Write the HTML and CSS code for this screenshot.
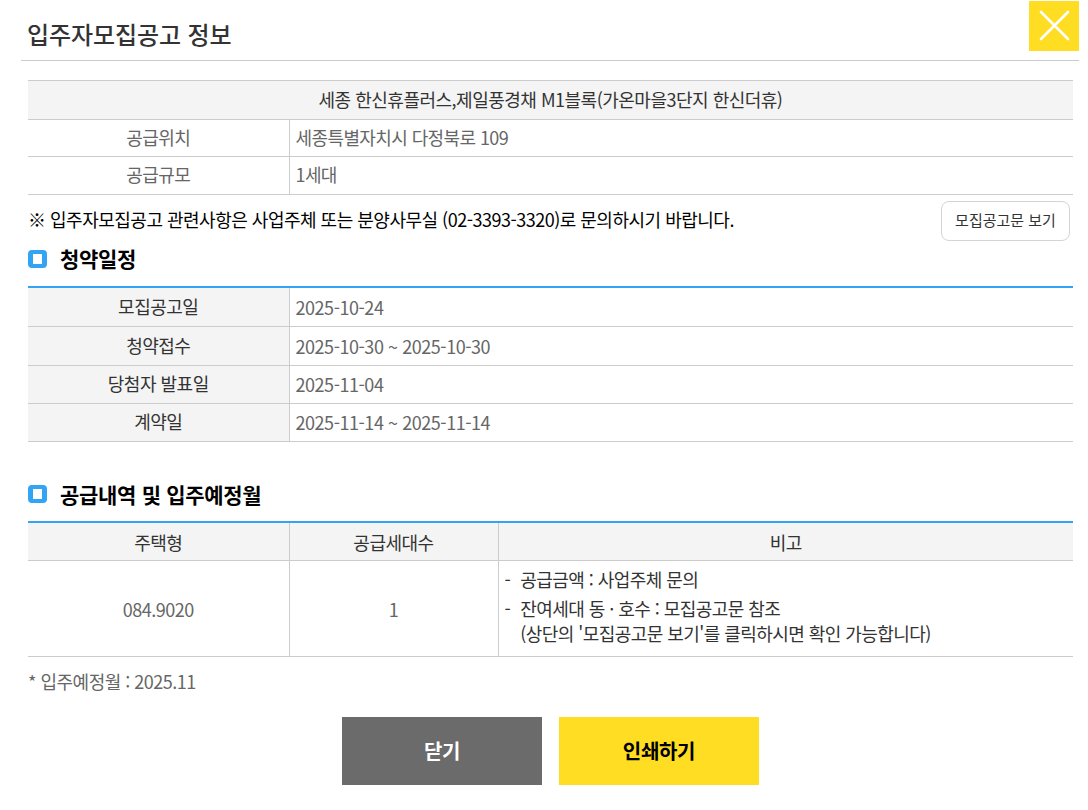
FILE: index.html
```html
<!DOCTYPE html>
<html lang="ko">
<head>
<meta charset="utf-8">
<title>입주자모집공고 정보</title>
<link rel="stylesheet" href="styles.css">
</head>
<body>
<div class="popup">
  <header class="popup-head">
    <h1 class="popup-title">입주자모집공고 정보</h1>
    <a class="close" href="#" aria-label="닫기">
      <svg width="50" height="50" viewBox="0 0 50 50"><path d="M12 11 L39 38 M39 11 L12 38" stroke="#fff" stroke-width="2.6" stroke-linecap="round" fill="none"/></svg>
    </a>
  </header>
  <main class="content">
    <table class="tbl info">
      <colgroup><col class="c1"><col></colgroup>
      <tr class="h39"><th colspan="2" class="name">세종 한신휴플러스,제일풍경채 M1블록(가온마을3단지 한신더휴)</th></tr>
      <tr class="h37"><td class="ctr">공급위치</td><td>세종특별자치시 다정북로 109</td></tr>
      <tr class="h38"><td class="ctr">공급규모</td><td>1세대</td></tr>
    </table>
    <div class="notice">
      <p>※ 입주자모집공고 관련사항은 사업주체 또는 분양사무실 (02-3393-3320)로 문의하시기 바랍니다.</p>
      <a class="doc-btn" href="#">모집공고문 보기</a>
    </div>
    <h2 class="sec sec-a"><span class="bullet"></span>청약일정</h2>
    <table class="tbl sched">
      <colgroup><col class="c1"><col></colgroup>
      <tr class="h39"><th>모집공고일</th><td>2025-10-24</td></tr>
      <tr class="h39"><th>청약접수</th><td>2025-10-30 ~ 2025-10-30</td></tr>
      <tr class="h38"><th>당첨자 발표일</th><td>2025-11-04</td></tr>
      <tr class="h38"><th>계약일</th><td>2025-11-14 ~ 2025-11-14</td></tr>
    </table>
    <h2 class="sec sec-b"><span class="bullet"></span>공급내역 및 입주예정월</h2>
    <table class="tbl supply">
      <colgroup><col class="c1"><col class="c2"><col></colgroup>
      <tr class="h39"><th>주택형</th><th>공급세대수</th><th>비고</th></tr>
      <tr class="h96">
        <td class="ctr">084.9020</td>
        <td class="ctr">1</td>
        <td class="remarks">
          <div class="rem"><span>-</span><span>공급금액 : 사업주체 문의</span></div>
          <div class="rem"><span>-</span><span>잔여세대 동 · 호수 : 모집공고문 참조<br>(상단의 '모집공고문 보기'를 클릭하시면 확인 가능합니다)</span></div>
        </td>
      </tr>
    </table>
    <p class="foot">* 입주예정월 : 2025.11</p>
    <div class="actions">
      <a class="btn btn-gray" href="#">닫기</a>
      <a class="btn btn-yellow" href="#">인쇄하기</a>
    </div>
  </main>
</div>
</body>
</html>
```
FILE: styles.css
```css
* { box-sizing: border-box; }
html, body { margin: 0; padding: 0; background: #fff; }
body {
  font-family: "Noto Sans CJK KR", "Noto Sans", sans-serif;
  font-size: 18px;
  color: #666;
  letter-spacing: -0.5px;
  overflow: hidden;
}
a { text-decoration: none; color: inherit; }
.popup { width: 1079px; }
.popup-head {
  margin-left: 21px;
  height: 61px;
  border-bottom: 1px solid #ccc;
  display: flex;
  justify-content: space-between;
  align-items: flex-start;
}
.popup-title {
  margin: 17px 0 0 6px;
  font-size: 24px;
  line-height: 34px;
  font-weight: 500;
  color: #333;
  letter-spacing: -0.1px;
}
.close {
  width: 50px;
  height: 50px;
  margin-top: 1px;
  background: #ffdd22;
  display: block;
}
.close svg { display: block; }
.content { padding: 19px 6px 0 28px; }
.tbl {
  width: 1045px;
  border-collapse: collapse;
  table-layout: fixed;
}
.c1 { width: 261px; }
.c2 { width: 209px; }
.tbl th, .tbl td {
  border-bottom: 1px solid #ccc;
  padding: 0 6px;
  font-size: 18px;
  line-height: 24px;
  text-align: left;
  vertical-align: middle;
}
.tbl th + th, .tbl th + td, .tbl td + td { border-left: 1px solid #ccc; }
.tbl th {
  background: #f4f4f4;
  font-weight: 400;
  color: #333;
  text-align: center;
}
.tbl .ctr { text-align: center; }
.info { border-top: 1px solid #ccc; }
.info th, .info td { padding-bottom: 2px; }
.info tr:last-child td { padding-bottom: 4px; }
.info td + td { letter-spacing: -0.6px; }
.sched, .supply { border-top: 2px solid #33a3f4; }
.sched th { padding-bottom: 2px; }
.sched td { letter-spacing: -0.45px; }
.supply th { padding-top: 2px; }
.h37 { height: 37px; }
.h38 { height: 38px; }
.h39 { height: 39px; }
.h96 { height: 96px; }
.notice {
  display: flex;
  justify-content: space-between;
  align-items: center;
  width: 1042px;
  margin-top: 6px;
  height: 40px;
}
.notice p {
  margin: 0 0 4px;
  color: #000;
  font-size: 18px;
  line-height: 24px;
}
.doc-btn {
  width: 129px;
  height: 40px;
  border: 1px solid #d4d4d4;
  border-radius: 8px;
  font-size: 15px;
  letter-spacing: 0;
  line-height: 36px;
  text-align: center;
  color: #333;
}
.sec {
  display: flex;
  align-items: center;
  margin: 0;
  font-size: 21px;
  line-height: 30px;
  font-weight: 700;
  color: #000;
  letter-spacing: -0.3px;
}
.sec-a { margin-top: 2px; margin-bottom: 13px; }
.sec-a .bullet { margin-top: 2px; }
.sec-b { margin-top: 37px; margin-bottom: 12px; }
.bullet {
  width: 19px;
  height: 18px;
  border-style: solid;
  border-color: #33a3f4;
  border-width: 4px 5px 4px 5px;
  border-radius: 4px;
  background: #fff;
  margin-right: 13px;
}
.tbl .remarks { padding: 6px 6px 10px; color: #333; line-height: 25px; letter-spacing: -0.55px; }
.rem { display: flex; gap: 10px; margin-bottom: 4px; }
.rem:last-child { margin-bottom: 0; }
.foot { margin: 12px 0 0; line-height: 24px; color: #666; }
.actions {
  display: flex;
  justify-content: center;
  gap: 17px;
  margin-top: 24px;
  width: 1045px;
}
.btn {
  width: 200px;
  height: 68px;
  font-size: 20px;
  font-weight: 700;
  line-height: 68px;
  letter-spacing: -0.3px;
  text-align: center;
}
.btn-gray { background: #6b6b6b; color: #fff; }
.btn-yellow { background: #ffdd22; color: #000; }
```
